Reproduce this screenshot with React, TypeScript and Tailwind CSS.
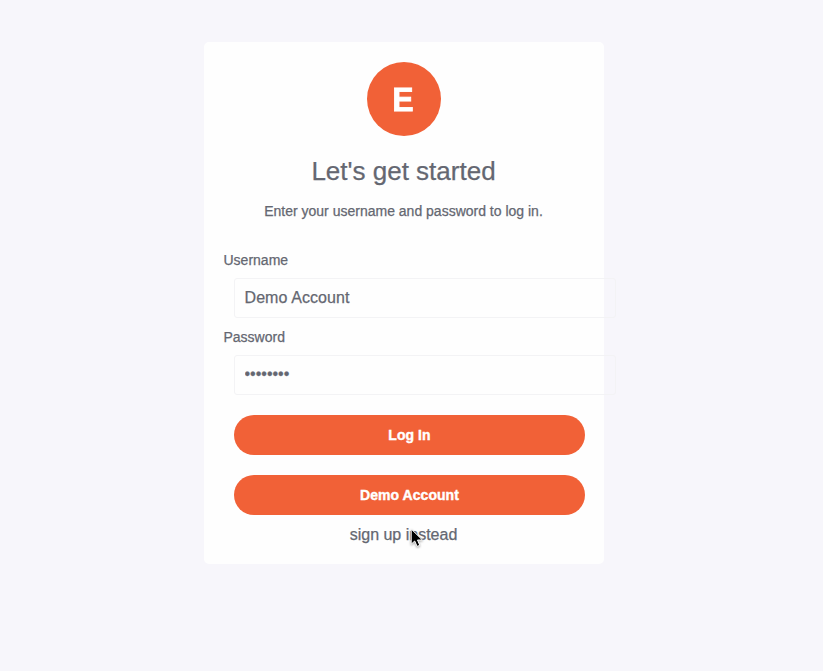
import React, { useState } from "react";

type FieldProps = {
  label: string;
  type: string;
  value: string;
  onChange: (value: string) => void;
  inputPadding: string;
};

function Field({ label, type, value, onChange, inputPadding }: FieldProps) {
  return (
    <label className="block h-[77px] text-sm leading-4">
      <span className="block pl-[19.5px]">{label}</span>
      <input
        type={type}
        value={value}
        onChange={(e) => onChange(e.target.value)}
        className={`mt-[10px] ml-[30px] block h-10 w-[382px] max-w-none rounded-[3px] border border-[#f3f3f5] bg-transparent px-[9.5px] text-base outline-none ${inputPadding}`}
      />
    </label>
  );
}

function PillButton({ children }: { children: React.ReactNode }) {
  return (
    <button
      type="button"
      className="ml-[30px] block h-10 w-[351px] rounded-[20px] bg-[#f16137] text-sm font-bold tracking-[0.05px] text-white [-webkit-text-stroke:0.4px_white]"
    >
      {children}
    </button>
  );
}

function Pointer() {
  return (
    <svg
      className="absolute top-[2px] left-[60px] drop-shadow-[0_1px_1px_rgba(0,0,0,0.35)]"
      width="14"
      height="20"
      viewBox="0 0 14 20"
    >
      <path
        d="M1.2 1v15.2l3.5-3.2 2.4 5.4 2.7-1.1-2.3-5.3h4.9z"
        fill="#000"
        stroke="#fff"
        strokeWidth="1"
      />
    </svg>
  );
}

export default function App() {
  const [username, setUsername] = useState("Demo Account");
  const [password, setPassword] = useState("password");

  return (
    <div className="min-h-screen bg-[#f7f6fb] pt-[42px] pl-[204px] font-['Liberation_Sans',Arial,sans-serif] text-[#646771] [-webkit-text-stroke:0.25px_#646771]">
      <main className="h-[522px] w-[400px] rounded-[5px] bg-[#fefefe] pt-5">
        <div className="mx-auto flex size-[74px] items-center justify-center rounded-full bg-[#f16137] pr-px pt-px text-[33px] font-bold text-white [-webkit-text-stroke:0.8px_white]">
          <span className="scale-x-97">E</span>
        </div>
        <h1 className="mt-5 pr-px text-center text-[26px] leading-[30px]">Let's get started</h1>
        <p className="mt-[17px] pr-px text-center text-sm leading-4">
          Enter your username and password to log in.
        </p>
        <form className="mt-[33px]">
          <Field label="Username" type="text" value={username} onChange={setUsername} inputPadding="pb-0 tracking-[0.08px]" />
          <Field label="Password" type="password" value={password} onChange={setPassword} inputPadding="pb-[2px]" />
          <div className="mt-[9px] flex flex-col gap-5">
            <PillButton>Log In</PillButton>
            <PillButton>Demo Account</PillButton>
          </div>
        </form>
        <div className="mt-[11px] flex justify-center pr-px leading-[18px]">
          <a className="relative">
            sign up instead
            <Pointer />
          </a>
        </div>
      </main>
    </div>
  );
}
